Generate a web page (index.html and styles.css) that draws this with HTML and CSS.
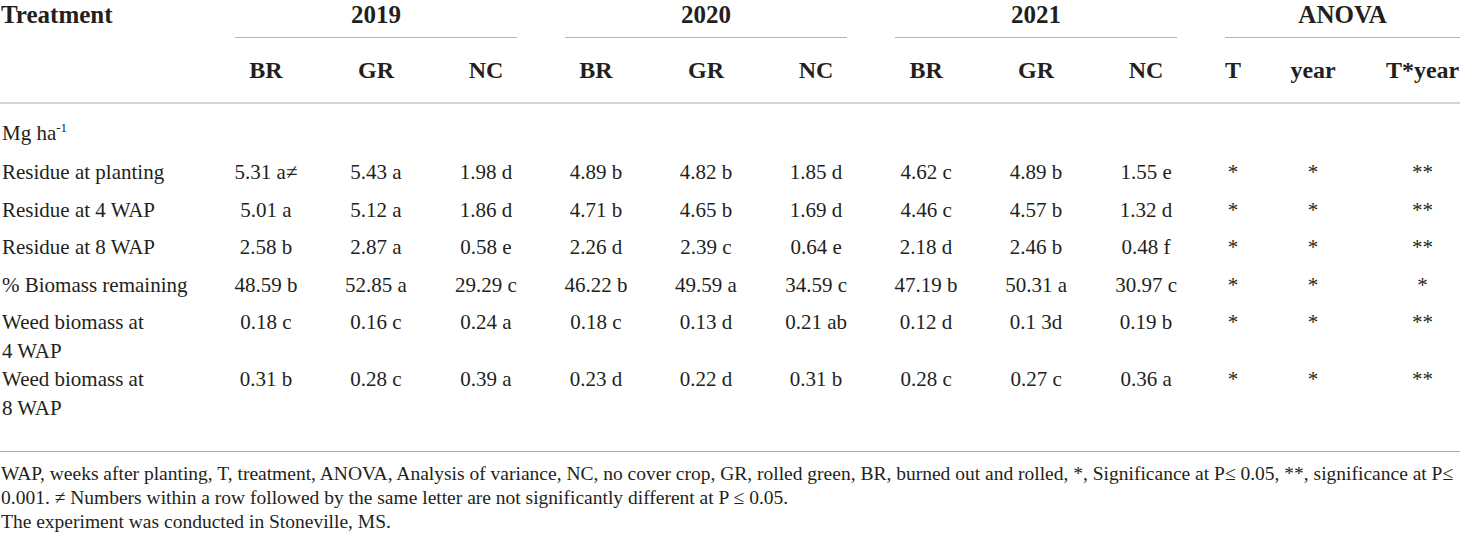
FILE: index.html
```html
<!DOCTYPE html>
<html lang="en">
<head>
  <meta charset="UTF-8">
  <title>Cover crop residue and weed biomass</title>
  <link rel="stylesheet" href="styles.css">
</head>
<body>

<div class="wrap">
  <table class="results">
    <colgroup>
      <col class="c-name">
      <col class="c-val"><col class="c-val"><col class="c-val">
      <col class="c-val"><col class="c-val"><col class="c-val">
      <col class="c-val"><col class="c-val"><col class="c-val">
      <col class="c-t"><col class="c-year"><col class="c-ty">
    </colgroup>
    <thead>
      <tr class="year-row">
        <th rowspan="2" class="name-head">Treatment</th>
        <th colspan="3"><div class="group">2019</div></th>
        <th colspan="3"><div class="group">2020</div></th>
        <th colspan="3"><div class="group">2021</div></th>
        <th colspan="3"><div class="group">ANOVA</div></th>
      </tr>
      <tr class="sub-row">
        <th>BR</th><th>GR</th><th>NC</th>
        <th>BR</th><th>GR</th><th>NC</th>
        <th>BR</th><th>GR</th><th>NC</th>
        <th>T</th><th>year</th><th>T*year</th>
      </tr>
    </thead>
    <tbody>
      <tr class="unit-row">
        <td>Mg ha<sup>-1</sup></td>
        <td></td><td></td><td></td><td></td><td></td><td></td><td></td><td></td><td></td><td></td><td></td><td></td>
      </tr>
      <tr>
        <td>Residue at planting</td>
        <td>5.31 a≠</td><td>5.43 a</td><td>1.98 d</td>
        <td>4.89 b</td><td>4.82 b</td><td>1.85 d</td>
        <td>4.62 c</td><td>4.89 b</td><td>1.55 e</td>
        <td>*</td><td>*</td><td>**</td>
      </tr>
      <tr>
        <td>Residue at 4 WAP</td>
        <td>5.01 a</td><td>5.12 a</td><td>1.86 d</td>
        <td>4.71 b</td><td>4.65 b</td><td>1.69 d</td>
        <td>4.46 c</td><td>4.57 b</td><td>1.32 d</td>
        <td>*</td><td>*</td><td>**</td>
      </tr>
      <tr>
        <td>Residue at 8 WAP</td>
        <td>2.58 b</td><td>2.87 a</td><td>0.58 e</td>
        <td>2.26 d</td><td>2.39 c</td><td>0.64 e</td>
        <td>2.18 d</td><td>2.46 b</td><td>0.48 f</td>
        <td>*</td><td>*</td><td>**</td>
      </tr>
      <tr>
        <td>% Biomass remaining</td>
        <td>48.59 b</td><td>52.85 a</td><td>29.29 c</td>
        <td>46.22 b</td><td>49.59 a</td><td>34.59 c</td>
        <td>47.19 b</td><td>50.31 a</td><td>30.97 c</td>
        <td>*</td><td>*</td><td>*</td>
      </tr>
      <tr class="wrap-row">
        <td>Weed biomass at<br>4 WAP</td>
        <td>0.18 c</td><td>0.16 c</td><td>0.24 a</td>
        <td>0.18 c</td><td>0.13 d</td><td>0.21 ab</td>
        <td>0.12 d</td><td>0.1 3d</td><td>0.19 b</td>
        <td>*</td><td>*</td><td>**</td>
      </tr>
      <tr class="wrap-row last-row">
        <td>Weed biomass at<br>8 WAP</td>
        <td>0.31 b</td><td>0.28 c</td><td>0.39 a</td>
        <td>0.23 d</td><td>0.22 d</td><td>0.31 b</td>
        <td>0.28 c</td><td>0.27 c</td><td>0.36 a</td>
        <td>*</td><td>*</td><td>**</td>
      </tr>
    </tbody>
  </table>
</div>

<div class="notes">
  <p>WAP, weeks after planting, T, treatment, ANOVA, Analysis of variance, NC, no cover crop, GR, rolled green, BR, burned out and rolled, *, Significance at P≤ 0.05, **, significance at P≤ 0.001. ≠ Numbers within a row followed by the same letter are not significantly different at P ≤ 0.05.</p>
  <p>The experiment was conducted in Stoneville, MS.</p>
</div>

</body>
</html>
```

FILE: styles.css
```css
html, body {
  margin: 0;
  overflow: hidden;
}
body {
  font-family: "Liberation Serif", "Times New Roman", serif;
  color: #231f20;
  background: #fff;
}
.wrap {
  width: 1460px;
  overflow: hidden;
}
.results {
  border-collapse: collapse;
  table-layout: fixed;
  width: 1484px;
}
.c-name { width: 211px; }
.c-val { width: 110px; }
.c-t { width: 64px; }
.c-year { width: 96px; }
.c-ty { width: 123px; }

th {
  font-weight: bold;
  font-size: 24px;
  line-height: 24px;
  padding: 0;
  text-align: center;
  color: #231f20;
}
.year-row th {
  font-size: 25px;
  line-height: 29px;
  vertical-align: top;
}
.year-row .group {
  margin: 0 24px;
  padding-bottom: 7.5px;
  border-bottom: 1px solid #b5b5b5;
}
.name-head {
  text-align: left;
  padding-left: 1px;
  border-bottom: 2px solid #d4d4d4;
}
.sub-row th {
  padding: 20.5px 0 20px;
  border-bottom: 2px solid #d4d4d4;
}

td {
  font-size: 21px;
  line-height: 28.5px;
  padding: 0 0 9px;
  text-align: center;
  vertical-align: top;
}
td:first-child {
  text-align: left;
  padding-left: 2px;
  white-space: nowrap;
}
sup {
  font-size: 13px;
  line-height: 0;
  vertical-align: 8px;
}
.unit-row td {
  padding-top: 15px;
  padding-bottom: 10.75px;
}
.wrap-row td {
  padding-bottom: 0;
}
.last-row td {
  padding-bottom: 29px;
  border-bottom: 1px solid #aaa;
}

.notes {
  width: 1460px;
  padding-top: 10px;
  font-size: 19.5px;
  line-height: 24px;
}
.notes p {
  margin: 0;
  padding-left: 1px;
}
```
